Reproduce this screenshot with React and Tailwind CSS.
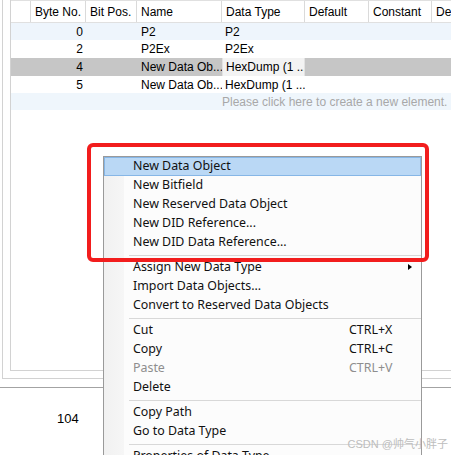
import React from "react";

const cols = [20, 55, 51, 85, 83, 64, 63, 80];

function HeaderCell({ w, children, last }) {
  return (
    <div
      className={`h-full flex items-center pl-[4px] shrink-0 whitespace-nowrap overflow-hidden ${last ? "" : "border-r border-[#dadada]"}`}
      style={{ width: w }}
    >
      {children}
    </div>
  );
}

function Row({ h, bg, byteNo, name, dtype, selected }) {
  return (
    <div className="flex items-center shrink-0" style={{ height: h, background: bg }}>
      <div className={`flex h-full items-center ${selected ? "bg-[#c6c6c6]" : ""}`}>
        <div className="w-[20px] shrink-0" />
        <div className="w-[55px] shrink-0 text-right pr-[3px]">{byteNo}</div>
        <div className="w-[51px] shrink-0" />
        <div className="w-[85px] shrink-0 pl-[4px] whitespace-nowrap overflow-hidden">{name}</div>
      </div>
      <div
        className={`w-[83px] h-full flex items-center shrink-0 pl-[3px] whitespace-nowrap overflow-hidden ${
          selected ? "bg-[#f3f3f3] border-x border-[#e2e2e2]" : ""
        }`}
      >
        {dtype}
      </div>
      <div className={`flex-1 h-full ${selected ? "bg-[#c6c6c6]" : ""}`} />
    </div>
  );
}

function Item({ children, shortcut, disabled, highlight, arrow }) {
  return (
    <div
      className={`relative h-[19px] flex items-center shrink-0 ${
        highlight ? "bg-[#bad8f5] shadow-[inset_0_0_0_1px_#86b6e6]" : ""
      } ${disabled ? "text-[#8e8e8e]" : "text-[#111]"}`}
    >
      <div className="pl-[29px] flex-1 whitespace-nowrap">{children}</div>
      {shortcut && <div className="w-[72px] whitespace-nowrap">{shortcut}</div>}
      {arrow && (
        <div className="absolute right-[9px] top-[6px] w-0 h-0 border-y-[3px] border-y-transparent border-l-[4px] border-l-black" />
      )}
    </div>
  );
}

function Sep() {
  return (
    <div className="h-[6px] flex items-center shrink-0 pl-[25px]">
      <div className="h-px w-full bg-[#d8d8d8]" />
    </div>
  );
}

export default function App() {
  return (
    <div className="relative w-[451px] h-[455px] overflow-hidden bg-white font-['Liberation_Sans',Arial,sans-serif] text-[12px] text-black">
      {/* background window */}
      <div className="flex flex-col">
        <div className="ml-[2px] border-l border-b border-[#d2d2d2] pb-[7px]">
          <div className="ml-[7px] h-[371px] border-l border-b border-[#d2d2d2] flex flex-col">
            <div className="h-[23px] flex border-t border-b border-[#e0e0e0] shrink-0">
              <HeaderCell w={cols[0]} />
              <HeaderCell w={cols[1]}>Byte No.</HeaderCell>
              <HeaderCell w={cols[2]}>Bit Pos.</HeaderCell>
              <HeaderCell w={cols[3]}>Name</HeaderCell>
              <HeaderCell w={cols[4]}>Data Type</HeaderCell>
              <HeaderCell w={cols[5]}>Default</HeaderCell>
              <HeaderCell w={cols[6]}>Constant</HeaderCell>
              <HeaderCell w={cols[7]} last>
                De
              </HeaderCell>
            </div>
            <Row h={17} bg="#eef5fc" byteNo="0" name="P2" dtype="P2" />
            <Row h={18} bg="#ffffff" byteNo="2" name="P2Ex" dtype="P2Ex" />
            <Row h={18} bg="#ffffff" byteNo="4" name="New Data Ob..." dtype="HexDump (1 ..." selected />
            <Row h={17} bg="#ffffff" byteNo="5" name="New Data Ob..." dtype="HexDump (1 ..." />
            <div className="h-[17px] shrink-0 bg-[#eff6fc] flex items-center pl-[211px] text-[#a8a8a8] whitespace-nowrap">
              Please click here to create a new element.
            </div>
          </div>
        </div>
        <div className="mt-[8px] h-px bg-[#a3a3a3]" />
        <div className="pl-[57px] pt-[24px] text-[13px] leading-none">104</div>
      </div>

      {/* context menu */}
      <div className="absolute left-[103px] top-[156px] w-[319px] h-[320px] border border-[#9a9a9a] bg-[#fcfcfc] font-['Noto_Sans',sans-serif] text-[12.4px]">
        <div className="absolute left-0 top-0 bottom-0 w-[20px] bg-gradient-to-r from-[#f1f1f1] to-[#f6f6f6]" />
        <div className="relative flex flex-col">
          <Item highlight>New Data Object</Item>
          <Item>New Bitfield</Item>
          <Item>New Reserved Data Object</Item>
          <Item>New DID Reference...</Item>
          <Item>New DID Data Reference...</Item>
          <Sep />
          <Item arrow>Assign New Data Type</Item>
          <Item>Import Data Objects...</Item>
          <Item>Convert to Reserved Data Objects</Item>
          <Sep />
          <Item shortcut="CTRL+X">Cut</Item>
          <Item shortcut="CTRL+C">Copy</Item>
          <Item shortcut="CTRL+V" disabled>
            Paste
          </Item>
          <Item>Delete</Item>
          <Sep />
          <Item>Copy Path</Item>
          <Item>Go to Data Type</Item>
          <Sep />
          <Item>Properties of Data Type</Item>
        </div>
      </div>

      {/* red annotation box */}
      <div className="absolute left-[87px] top-[143px] w-[342px] h-[119px] border-[4px] border-[#f21d1d] rounded-[6px]" />

      {/* watermark */}
      <div className="absolute right-[3px] top-[436px] text-[11px] text-[#bdbdbd] font-['Liberation_Sans','Noto_Sans_CJK_SC',sans-serif] whitespace-nowrap">
        CSDN @帅气小胖子
      </div>
    </div>
  );
}
